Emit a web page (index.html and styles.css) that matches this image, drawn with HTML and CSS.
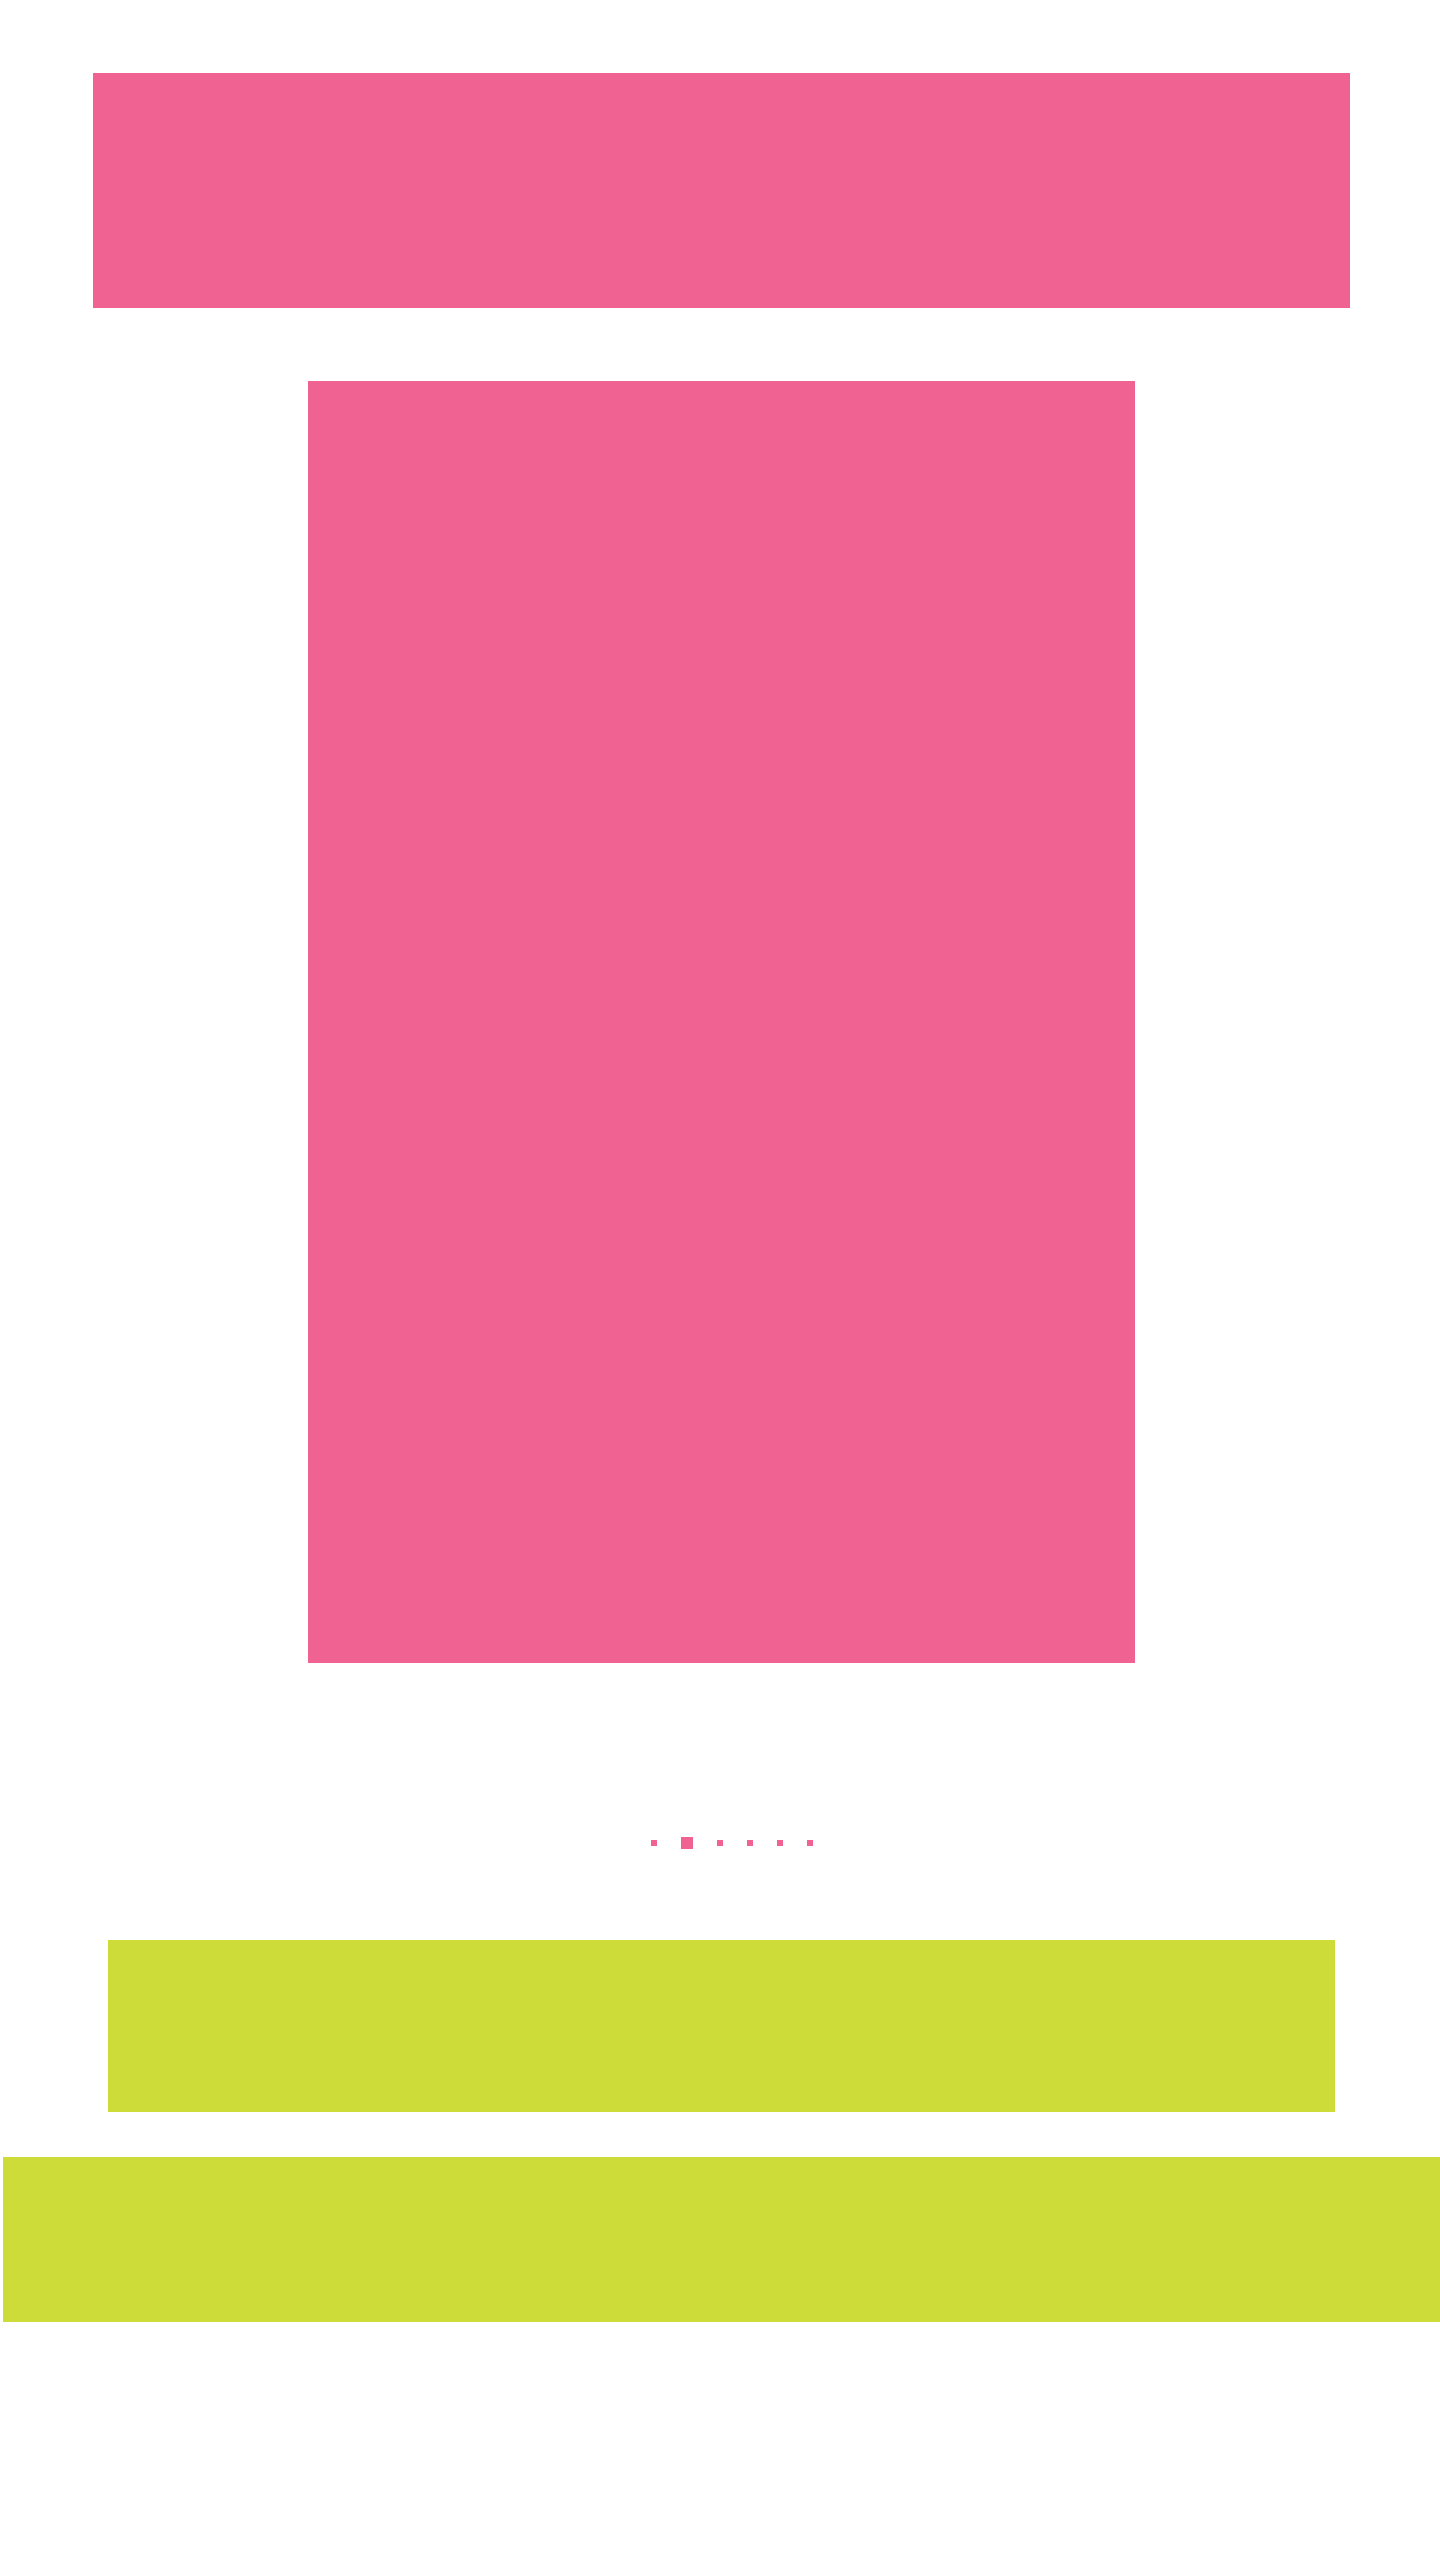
FILE: index.html
```html
<!DOCTYPE html>
<html lang="en">
<head>
<meta charset="utf-8">
<title>Page</title>
<link rel="stylesheet" href="styles.css">
</head>
<body>
  <div class="page">
    <header class="banner"></header>
    <main class="hero"></main>
    <nav class="dots" aria-label="Slides">
      <span class="dot"></span>
      <span class="dot active"></span>
      <span class="dot"></span>
      <span class="dot"></span>
      <span class="dot"></span>
      <span class="dot"></span>
    </nav>
    <section class="panel"></section>
    <footer class="footer-band"></footer>
  </div>
</body>
</html>
```

FILE: styles.css
```css
html, body {
  margin: 0;
  padding: 0;
  background: #ffffff;
  font-family: "Liberation Sans", Arial, sans-serif;
}

.page {
  display: flex;
  flex-direction: column;
  min-height: 2560px;
}

.banner {
  margin: 73px 90px 0 93px;
  height: 235px;
  background: #f06292;
}

.hero {
  margin: 73px 0 0 308px;
  width: 827px;
  height: 1282px;
  background: #f06292;
}

.dots {
  display: flex;
  align-items: center;
  gap: 24px;
  margin-top: 174px;
  padding-left: 651px;
  height: 12px;
}

.dot {
  width: 6px;
  height: 6px;
  background: #f06292;
}

.dot.active {
  width: 12px;
  height: 12px;
}

.panel {
  margin: 91px 0 0 108px;
  width: 1227px;
  height: 172px;
  background: #cddc39;
}

.footer-band {
  margin: 45px 0 0 3px;
  height: 165px;
  background: #cddc39;
}
```
